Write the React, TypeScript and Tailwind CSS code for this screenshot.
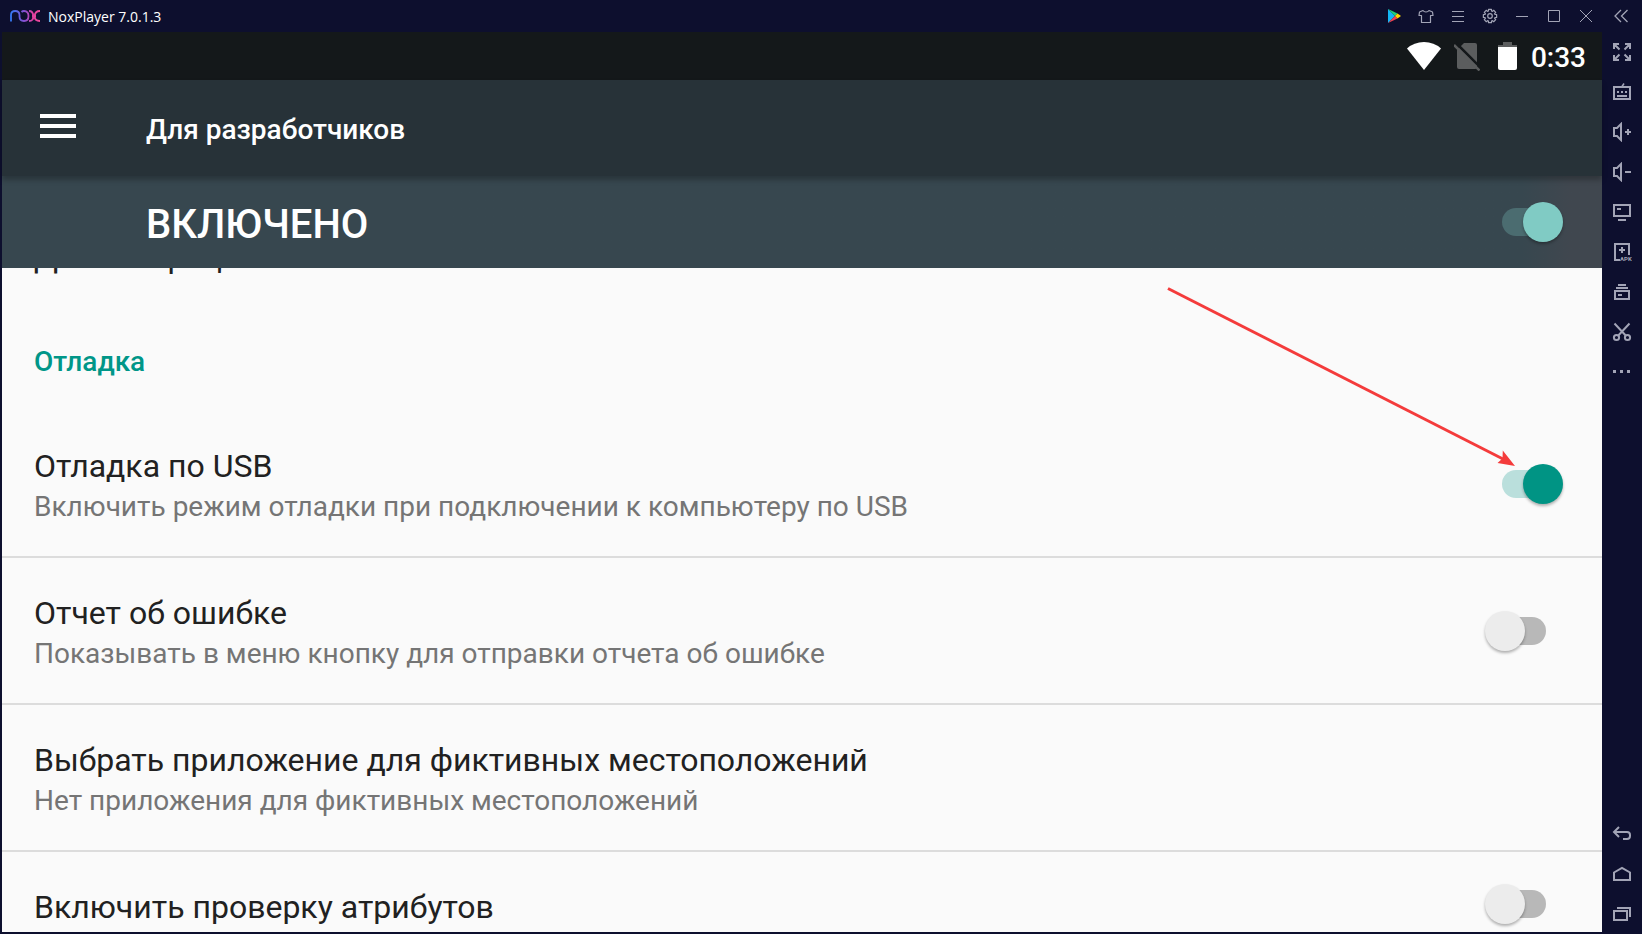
import type { ReactNode } from "react";

function gearPath(cx: number, cy: number) {
  const teeth = 8;
  const points: string[] = [];
  for (let i = 0; i < teeth; i++) {
    const mid = (i / teeth) * Math.PI * 2;
    const at = (angle: number, r: number) =>
      `${(cx + Math.cos(angle) * r).toFixed(2)} ${(cy + Math.sin(angle) * r).toFixed(2)}`;
    points.push(`${i === 0 ? "M" : "L"}${at(mid - 0.3, 5.2)}`);
    points.push(`L${at(mid - 0.22, 6.8)}`);
    points.push(`L${at(mid + 0.22, 6.8)}`);
    points.push(`L${at(mid + 0.3, 5.2)}`);
  }
  return points.join("") + "Z";
}

function Glyph({ children, thin = false }: { children: ReactNode; thin?: boolean }) {
  return (
    <svg
      viewBox="0 0 20 20"
      className="size-5"
      fill="none"
      stroke="currentColor"
      strokeWidth={thin ? 1 : 2}
      aria-hidden="true"
    >
      {children}
    </svg>
  );
}

const windowTools: { label: string; icon: ReactNode }[] = [
  {
    label: "Google Play",
    icon: (
      <g stroke="none">
        <path d="M4 3v14l7-7z" fill="#13b5f5" />
        <path d="M4 3l7 7 2.5-2.4z" fill="#1fd07a" />
        <path d="M4 17l7-7 2.5 2.4z" fill="#f0404f" />
        <path d="M13.5 7.6L17 10l-3.5 2.4L11 10z" fill="#ffd500" />
      </g>
    ),
  },
  {
    label: "Темы",
    icon: (
      <path
        d="M7 4.500L3.500 6 3 9.500h2.500v7h9v-7H17L16.500 6 13 4.500q-1 1.500-3 1.500T7 4.500z"
        strokeWidth="1.200"
        strokeLinejoin="round"
      />
    ),
  },
  { label: "Меню", icon: <path d="M4 5.500h12M4 10.500h12M4 15.500h12" /> },
  {
    label: "Настройки",
    icon: (
      <>
        <path d={gearPath(10, 10)} strokeWidth="1.200" strokeLinejoin="round" />
        <circle cx="10" cy="10" r="2.300" strokeWidth="1.200" />
      </>
    ),
  },
  { label: "Свернуть", icon: <path d="M4 10.500h12" /> },
  { label: "Развернуть", icon: <path d="M4.500 4.500h11v11h-11z" /> },
  { label: "Закрыть", icon: <path d="M4 4l12 12M16 4L4 16" /> },
];

const sideTools: { label: string; icon: ReactNode }[] = [
  {
    label: "Полный экран",
    icon: <path d="M2 7V2h5M2 2l5.500 5.500M13 2h5v5M18 2l-5.500 5.500M2 13v5h5M2 18l5.500-5.500M13 18h5v-5M18 18l-5.500-5.500" />,
  },
  {
    label: "Клавиатура",
    icon: (
      <>
        <rect x="2" y="5" width="16" height="12" />
        <path d="M5 10h2M9 10h2M13 10h2M5 14h10" />
        <path d="M10 4.500l2-3" strokeWidth="1.500" />
      </>
    ),
  },
  { label: "Громче", icon: <path d="M2 6h3l4-4v16l-4-4H2zM13 10h6M16 7v6" /> },
  { label: "Тише", icon: <path d="M2 6h3l4-4v16l-4-4H2zM13 10h6" /> },
  {
    label: "Экран",
    icon: (
      <>
        <rect x="2" y="3" width="16" height="11" />
        <path d="M5 7h4M6 18h8" />
      </>
    ),
  },
  {
    label: "Установить APK",
    icon: (
      <>
        <path d="M8 18H3V2h14v11M7 8h6M10 5v6" />
        <text
          x="8"
          y="19"
          fontSize="6"
          fontWeight="700"
          fontFamily="Roboto, sans-serif"
          fill="currentColor"
          stroke="none"
        >
          APK
        </text>
      </>
    ),
  },
  {
    label: "Менеджер окон",
    icon: (
      <>
        <path d="M6 3h8M4 6h12M6 13h4" />
        <rect x="3" y="9" width="14" height="8" />
      </>
    ),
  },
  {
    label: "Снимок экрана",
    icon: (
      <>
        <circle cx="4.500" cy="15.500" r="2.600" />
        <circle cx="15.500" cy="15.500" r="2.600" />
        <path d="M2.500 1.500L13.700 13.500M17.500 1.500L6.300 13.500" />
      </>
    ),
  },
  { label: "Ещё", icon: <path d="M1 9.500h3M8 9.500h3M15 9.500h3" strokeWidth="3" /> },
];

const navTools: { label: string; icon: ReactNode }[] = [
  {
    label: "Назад",
    icon: <path d="M7 3L2 8l5 5M2 8h13q3 0 3 3v1q0 3-3 3h-4" />,
  },
  { label: "Домой", icon: <path d="M2 8.500L10 4l8 4.500V16H2z" /> },
  {
    label: "Недавние",
    icon: (
      <>
        <rect x="2" y="7" width="13" height="9" />
        <path d="M5 4h13v9" />
      </>
    ),
  },
];

function SideButton({ label, icon }: { label: string; icon: ReactNode }) {
  return (
    <button type="button" aria-label={label} className="flex size-10 items-center justify-center">
      <Glyph>{icon}</Glyph>
    </button>
  );
}

function Logo() {
  return (
    <svg viewBox="0 0 30 12" className="h-3 w-[30px]" fill="none" strokeWidth="1.800" aria-hidden="true">
      <defs>
        <linearGradient id="nox" gradientUnits="userSpaceOnUse" x1="0" y1="0" x2="30" y2="0">
          <stop offset="0" stopColor="#2f7bf6" />
          <stop offset="0.500" stopColor="#8a4fd0" />
          <stop offset="0.750" stopColor="#e0409f" />
          <stop offset="1" stopColor="#f0489c" />
        </linearGradient>
      </defs>
      <g stroke="url(#nox)">
        <path d="M1 11.500V5q0-4 4.200-4T9.500 5v1.500q0 4.500 4.500 4.500t4.500-5-4.500-5q-1.500 0-2.500 1" />
        <path d="M19 1q4 0 4.300 5T19 11" />
        <path d="M30 1q-5 0-5.300 5T30 11" />
        <path d="M22 6h4" strokeWidth="3" />
      </g>
    </svg>
  );
}

function Switch({
  id,
  on = false,
  tone = "light",
}: {
  id: string;
  on?: boolean;
  tone?: "light" | "dark";
}) {
  const colors =
    tone === "dark"
      ? "checked:bg-[#4b6c70] checked:before:bg-[#80cbc4]"
      : "checked:bg-[#badfdc] checked:before:bg-[#009484]";
  return (
    <input
      id={id}
      type="checkbox"
      role="switch"
      defaultChecked={on}
      className={`relative h-7 w-11 shrink-0 appearance-none rounded-full bg-[#b8b8b8] before:absolute before:-top-1.5 before:-left-[17px] before:size-10 before:rounded-full before:bg-[#ececec] before:shadow-[0_2px_3px_rgba(0,0,0,0.3)] checked:before:left-[21px] ${colors}`}
    />
  );
}

function Row({
  id,
  title,
  summary,
  toggle,
  divided = true,
}: {
  id: string;
  title: string;
  summary?: string;
  toggle?: "on" | "off";
  divided?: boolean;
}) {
  const text = (
    <>
      <span className="block text-[32px] leading-10 text-[#212121]">{title}</span>
      {summary && <span className="block text-[28px] leading-[42px] text-[#757575]">{summary}</span>}
    </>
  );
  return (
    <li
      className={`flex shrink-0 items-center justify-between pr-14 pl-8 ${
        divided ? "border-b-2 border-[#dcdcdc]" : ""
      }`}
    >
      {toggle ? (
        <label htmlFor={id} className="grow pt-[35px] pb-7">
          {text}
        </label>
      ) : (
        <div className="grow pt-[35px] pb-7">{text}</div>
      )}
      {toggle && <Switch id={id} on={toggle === "on"} />}
    </li>
  );
}

export default function App() {
  return (
    <div className="flex h-screen flex-col overflow-hidden bg-[#0d0f2e] font-['Roboto',sans-serif] text-[#a2a4b6]">
      <header className="flex h-8 shrink-0 items-center">
        <div className="flex grow items-center gap-2 pl-2.5">
          <Logo />
          <span className="pt-px font-['Open_Sans',sans-serif] text-sm text-white">NoxPlayer 7.0.1.3</span>
        </div>
        {windowTools.map((tool) => (
          <button
            key={tool.label}
            type="button"
            aria-label={tool.label}
            className="flex size-8 items-center justify-center"
          >
            <Glyph thin>{tool.icon}</Glyph>
          </button>
        ))}
        <button type="button" aria-label="Скрыть панель" className="flex h-8 w-10 items-center justify-center">
          <Glyph thin>
            <path d="M9 4l-6 6 6 6M15.500 4l-6 6 6 6" strokeWidth="1.300" />
          </Glyph>
        </button>
      </header>

      <div className="flex min-h-0 grow">
        <main className="mb-0.5 ml-0.5 flex min-w-0 grow flex-col bg-[#fafafa]">
          <div className="flex h-12 shrink-0 items-center justify-end bg-[#14181a] pr-4 text-white">
            <svg viewBox="0 0 34 28" className="mr-[13px] h-7 w-[34px]" aria-hidden="true">
              <path d="M0 6.500Q7 0 17 0t17 6.500L17 28z" fill="#fff" />
            </svg>
            <svg viewBox="0 0 26 30" className="mr-[18px] h-[30px] w-[26px]" aria-hidden="true">
              <path d="M10 2h11q2 0 2 2v22q0 2-2 2H5q-2 0-2-2V9z" fill="#5b5d5e" />
              <path d="M1.500 1.500L28 28" stroke="#14181a" strokeWidth="2.500" />
              <path d="M0 4l25.500 25.500" stroke="#5b5d5e" strokeWidth="2.500" />
            </svg>
            <svg viewBox="0 0 19 30" className="mr-3.5 h-[30px] w-[19px]" aria-hidden="true">
              <path d="M5 1h9v3h5v2H0V4h5z" fill="#5b5d5e" />
              <path d="M0 6h19v21q0 2-2 2H2q-2 0-2-2z" fill="#fff" />
            </svg>
            <time className="pt-1 text-[28px] leading-8 font-medium">0:33</time>
          </div>

          <div className="relative z-10 flex h-24 shrink-0 items-center bg-[#273238] pl-[38px] text-white shadow-[0_4px_5px_rgba(0,0,0,0.25)]">
            <button type="button" aria-label="Открыть меню" className="mb-1 flex w-9 flex-col gap-1.5">
              <span className="h-1 w-full bg-white" />
              <span className="h-1 w-full bg-white" />
              <span className="h-1 w-full bg-white" />
            </button>
            <h1 className="pt-1 pl-[70px] text-[28px] leading-8 font-medium">Для разработчиков</h1>
          </div>

          <div className="flex h-[92px] shrink-0 items-center justify-between bg-linear-to-r from-[#37474f] from-95% to-[#40474f] to-98% pr-14 pl-36 text-white">
            <label htmlFor="developer" className="pt-1.5 text-[40px] leading-12 font-medium">
              ВКЛЮЧЕНО
            </label>
            <Switch id="developer" on tone="dark" />
          </div>

          <section className="relative min-h-0 grow overflow-hidden">
            <ul className="-mt-[66px] flex flex-col">
              <Row id="demo" title="Демонстрация" divided={false} />
              <li className="pt-[37px] pb-[29px] pl-8">
                <h2 className="text-[28px] leading-10 font-medium text-[#009688]">Отладка</h2>
              </li>
              <Row
                id="usb"
                title="Отладка по USB"
                summary="Включить режим отладки при подключении к компьютеру по USB"
                toggle="on"
              />
              <Row
                id="report"
                title="Отчет об ошибке"
                summary="Показывать в меню кнопку для отправки отчета об ошибке"
                toggle="off"
              />
              <Row
                id="mock"
                title="Выбрать приложение для фиктивных местоположений"
                summary="Нет приложения для фиктивных местоположений"
              />
              <Row id="attributes" title="Включить проверку атрибутов" toggle="off" divided={false} />
            </ul>
            <svg
              viewBox="0 0 350 182"
              className="pointer-events-none absolute top-[19px] right-[87px] h-[182px] w-[350px]"
              aria-hidden="true"
            >
              <path d="M3 1.500L338 172" stroke="#f43b3b" strokeWidth="3" />
              <path d="M350 179l-17.500-3 5-4.500.300-8z" fill="#f43b3b" />
            </svg>
          </section>
        </main>

        <aside className="flex w-10 shrink-0 flex-col justify-between">
          <div>
            {sideTools.map((tool) => (
              <SideButton key={tool.label} {...tool} />
            ))}
          </div>
          <nav>
            {navTools.map((tool) => (
              <SideButton key={tool.label} {...tool} />
            ))}
          </nav>
        </aside>
      </div>
    </div>
  );
}
